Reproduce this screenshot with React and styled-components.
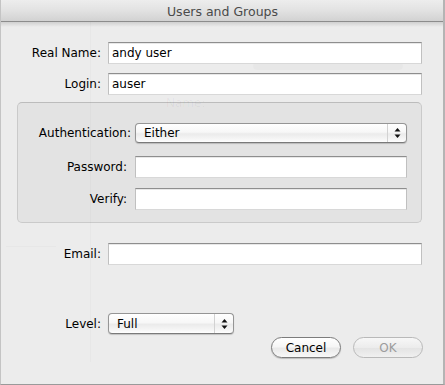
import React from "react";
import styled, { createGlobalStyle } from "styled-components";

const Global = createGlobalStyle`
  html, body { margin: 0; padding: 0; background: #ececec; }
  body { font-family: "DejaVu Sans", "Liberation Sans", sans-serif; }
`;

const Window = styled.div`
  width: 445px;
  height: 385px;
  box-sizing: border-box;
  display: flex;
  flex-direction: column;
  background: #ececec;
  overflow: hidden;
  border-bottom: 1px solid #9a9a9a;
  border-left: 1px solid #c4c4c4;
  border-right: 2px solid #b4b4b4;
`;

const TitleBar = styled.div`
  height: 22px;
  flex: none;
  box-sizing: border-box;
  display: flex;
  align-items: center;
  justify-content: center;
  margin: 0 -2px 0 -1px;
  background: linear-gradient(#ededed, #e2e2e2 50%, #d2d2d2);
  border-bottom: 1px solid #8c8c8c;
  color: #4a4a4a;
  font-size: 12.5px;
  padding-top: 1px;
`;

const Sheet = styled.div`
  position: relative;
  flex: 1;
  display: flex;
  flex-direction: column;
  padding: 0 21px 0 16px;
  &::before {
    content: "";
    position: absolute;
    left: 0; right: 0; top: 0;
    height: 5px;
    background: linear-gradient(rgba(0,0,0,0.12), rgba(0,0,0,0));
    pointer-events: none;
  }
`;

const Ghost = styled.div`
  position: absolute;
  left: ${(p) => p.$x}px;
  top: ${(p) => p.$y}px;
  font-size: 12px;
  color: rgba(0,0,0,0.04);
  pointer-events: none;
  white-space: nowrap;
`;

const GhostLine = styled.div`
  position: absolute;
  left: ${(p) => p.$x}px;
  top: ${(p) => p.$y}px;
  width: ${(p) => p.$w}px;
  height: ${(p) => p.$h}px;
  background: rgba(0,0,0,0.02);
  border-radius: ${(p) => p.$r || 0}px;
  pointer-events: none;
`;

const Row = styled.div`
  position: relative;
  display: flex;
  align-items: center;
  margin-top: ${(p) => p.$mt || 0}px;
  height: ${(p) => p.$h || 22}px;
`;

const Label = styled.div`
  flex: none;
  width: ${(p) => p.$w}px;
  box-sizing: border-box;
  text-align: right;
  font-size: 12px;
  color: #000;
  margin-right: ${(p) => p.$gap || 7}px;
`;

const TextField = styled.input`
  flex: 1;
  min-width: 0;
  height: 100%;
  box-sizing: border-box;
  margin: 0;
  padding: 0 0 0 3px;
  background: #fff;
  border: 1px solid;
  border-color: #8e8e8e #c0c0c0 #d8d8d8 #c0c0c0;
  box-shadow: inset 0 1px 0 #e8e8e8;
  font-family: "DejaVu Sans", "Liberation Sans", sans-serif;
  font-size: 12px;
  color: #000;
  outline: none;
`;

const Popup = styled.div`
  position: relative;
  flex: ${(p) => (p.$w ? "none" : 1)};
  width: ${(p) => (p.$w ? p.$w + "px" : "auto")};
  height: 100%;
  box-sizing: border-box;
  display: flex;
  align-items: center;
  border: 1px solid #959595;
  border-bottom-color: #7a7a7a;
  border-radius: 4px;
  background: linear-gradient(#ffffff, #f7f7f7 45%, #ebebeb 55%, #f6f6f6 85%, #ffffff);
  box-shadow: 0 1px 1px rgba(0,0,0,0.18);
  font-size: 12px;
  color: #000;
  padding-left: 8px;
`;

const PopupText = styled.span`
  flex: 1;
`;

const Arrows = styled.div`
  flex: none;
  width: 19px;
  height: 100%;
  box-sizing: border-box;
  border-left: 1px solid #d2d2d2;
  display: flex;
  align-items: center;
  justify-content: center;
`;

const GroupBox = styled.div`
  margin-top: 7px;
  height: 121px;
  box-sizing: border-box;
  display: flex;
  flex-direction: column;
  padding: 20px 14px 0 0;
  background: #e3e3e3;
  border: 1px solid #cacaca;
  border-top-color: #bcbcbc;
  border-radius: 5px;
`;

const ButtonRow = styled.div`
  display: flex;
  justify-content: flex-end;
  gap: 12px;
  margin-top: 3px;
  margin-right: -1px;
`;

const Button = styled.div`
  width: 70px;
  height: 21px;
  box-sizing: border-box;
  display: flex;
  align-items: center;
  justify-content: center;
  border-radius: 11px;
  border: 1px solid ${(p) => (p.$disabled ? "#b9b9b9" : "#7c7c7c")};
  background: ${(p) =>
    p.$disabled
      ? "linear-gradient(#f7f7f7, #ececec 50%, #e4e4e4 55%, #f0f0f0)"
      : "linear-gradient(#ffffff, #f6f6f6 45%, #e9e9e9 55%, #f8f8f8)"};
  box-shadow: ${(p) => (p.$disabled ? "none" : "0 1px 1px rgba(0,0,0,0.2)")};
  font-size: 12px;
  color: ${(p) => (p.$disabled ? "#9c9c9c" : "#000")};
`;

const UpDown = () => (
  <svg width="7" height="12" viewBox="0 0 7 12">
    <path d="M3.5 1 L6.5 4.5 L0.5 4.5 Z" fill="#111" />
    <path d="M0.5 7.5 L6.5 7.5 L3.5 11 Z" fill="#111" />
  </svg>
);

export default function App() {
  return (
    <>
      <Global />
      <Window>
        <TitleBar>Users and Groups</TitleBar>
        <Sheet>
          <Ghost $x={165} $y={74}>Name:</Ghost>
          <GhostLine $x={252} $y={40} $w={150} $h={8} $r={4} />
          <GhostLine $x={89} $y={0} $w={1} $h={340} />
          <GhostLine $x={5} $y={224} $w={50} $h={1} />

          <Row $mt={20}>
            <Label $w={84}>Real Name:</Label>
            <TextField readOnly defaultValue="andy user" />
          </Row>
          <Row $mt={9}>
            <Label $w={84}>Login:</Label>
            <TextField readOnly defaultValue="auser" />
          </Row>

          <GroupBox>
            <Row $h={20}>
              <Label $w={113} $gap={4}>Authentication:</Label>
              <Popup>
                <PopupText>Either</PopupText>
                <Arrows><UpDown /></Arrows>
              </Popup>
            </Row>
            <Row $mt={13}>
              <Label $w={109} $gap={8}>Password:</Label>
              <TextField readOnly defaultValue="" />
            </Row>
            <Row $mt={10}>
              <Label $w={109} $gap={8}>Verify:</Label>
              <TextField readOnly defaultValue="" />
            </Row>
          </GroupBox>

          <Row $mt={20} $h={22}>
            <Label $w={84}>Email:</Label>
            <TextField readOnly defaultValue="" />
          </Row>

          <Row $mt={48} $h={21}>
            <Label $w={84}>Level:</Label>
            <Popup $w={126}>
              <PopupText>Full</PopupText>
              <Arrows><UpDown /></Arrows>
            </Popup>
          </Row>

          <ButtonRow>
            <Button>Cancel</Button>
            <Button $disabled>OK</Button>
          </ButtonRow>
        </Sheet>
      </Window>
    </>
  );
}
